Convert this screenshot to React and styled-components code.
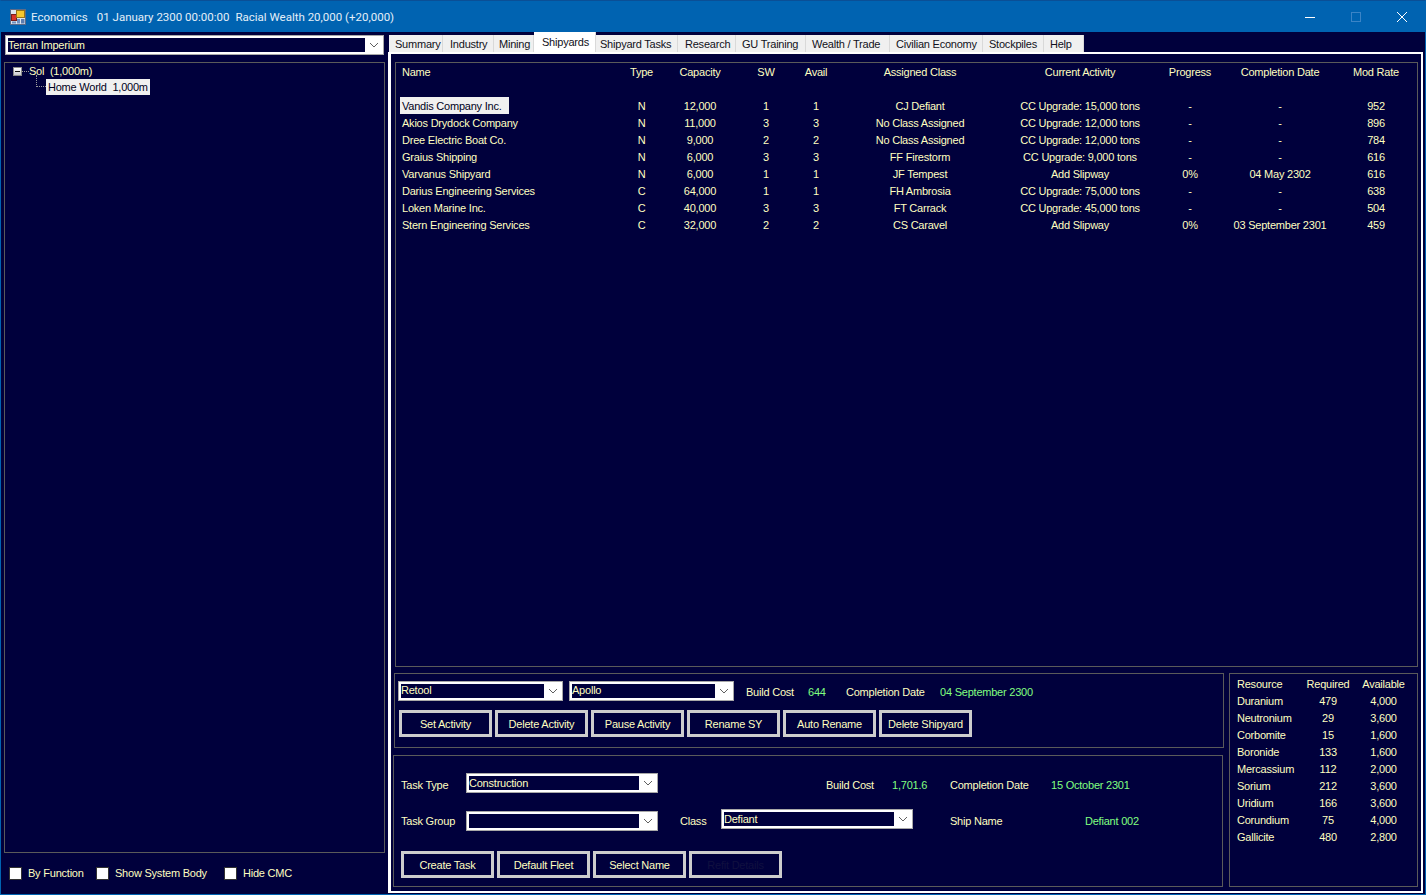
import React from 'react';
import styled, { createGlobalStyle } from 'styled-components';

const GlobalStyle = createGlobalStyle`
  html, body {
    margin: 0;
    padding: 0;
    background: #00003c;
  }
  * {
    box-sizing: border-box;
  }
`;

const Window = styled.div`
  width: 1426px;
  height: 895px;
  display: flex;
  flex-direction: column;
  overflow: hidden;
  background: #00003c;
  border: 1px solid #0063b1;
  border-top: 1px solid #0a4f96;
  font-family: "Liberation Sans", Arial, sans-serif;
  font-size: 11px;
  letter-spacing: -0.22px;
  color: #ffffc0;
`;

const TitleBar = styled.div`
  height: 31px;
  flex: none;
  display: flex;
  align-items: center;
  background: #0063b1;
  padding-left: 9px;
  color: #e4eff8;
  font-family: Roboto, "Open Sans", sans-serif;
  font-size: 11.5px;
  letter-spacing: 0;
`;

const TitleText = styled.span`
  margin-left: ${p => p.$gap}px;
  white-space: pre;
`;

const WindowControls = styled.div`
  margin-left: auto;
  display: flex;
  height: 100%;
`;

const WindowControl = styled.div`
  width: 46px;
  height: 100%;
  display: flex;
  align-items: center;
  justify-content: center;
`;

const Main = styled.div`
  flex: 1;
  min-height: 0;
  display: flex;
`;

const LeftPane = styled.div`
  width: 386px;
  flex: none;
  display: flex;
  flex-direction: column;
  padding: 3px 2px 0 3px;
`;

const GroupPanel = styled.div`
  border: 1px solid #5a5a5a;
`;

const TreePanel = styled(GroupPanel)`
  height: 791px;
  margin-top: 7px;
  padding: 0 0 0 8px;
`;

const TreeRoot = styled.div`
  height: 16px;
  display: flex;
  align-items: center;
`;

const MinusBox = styled.div`
  width: 9px;
  height: 9px;
  flex: none;
  background: linear-gradient(#ffffff, #c8c8d0);
  border: 1px solid #8a8a8a;
  display: flex;
  align-items: center;
  justify-content: center;
  &::after {
    content: '';
    width: 5px;
    height: 1px;
    background: #111;
  }
`;

const TreeDots = styled.div`
  width: 7px;
  height: 0;
  flex: none;
  border-top: 1px dotted #9a9a9a;
`;

const TreeChildRow = styled.div`
  display: flex;
  align-items: center;
  padding-left: 23px;
  height: 16px;
`;

const TreeElbow = styled.div`
  width: 10px;
  height: 12px;
  flex: none;
  margin-top: -12px;
  border-left: 1px dotted #9a9a9a;
  border-bottom: 1px dotted #9a9a9a;
`;

const SelectedLabel = styled.span`
  display: inline-flex;
  align-items: center;
  height: ${p => p.$height}px;
  padding: 0 2px;
  background: #f0f0f0;
  color: #000020;
  white-space: pre;
`;

const Label = styled.span`
  white-space: pre;
  flex: none;
  color: ${p => (p.$green ? '#80ff80' : '#ffffc0')};
  width: ${p => (p.$w ? `${p.$w}px` : 'auto')};
  margin-left: ${p => p.$ml || 0}px;
`;

const OptionsRow = styled.div`
  flex: 1;
  display: flex;
  align-items: center;
  padding: 0 0 1px 5px;
`;

const CheckBox = styled.div`
  width: 13px;
  height: 13px;
  flex: none;
  background: #fff;
  border: 1px solid #333;
  margin-right: 6px;
`;

const CheckItem = styled.label`
  display: flex;
  align-items: center;
  width: ${p => p.$w}px;
`;

const SelectBox = styled.div`
  width: ${p => p.$w}px;
  height: 20px;
  flex: none;
  display: flex;
  background: #fff;
  border: 1px solid #a8a8a8;
  padding: 2px 0 2px 2px;
  margin-left: ${p => p.$ml || 0}px;
  margin-bottom: ${p => p.$lift || 0}px;
`;

const SelectValue = styled.div`
  flex: 1;
  background: #00003c;
  color: #ffffc0;
  padding-top: ${p => p.$top || 0}px;
  line-height: 12px;
  white-space: pre;
  overflow: hidden;
`;

const SelectArrow = styled.div`
  width: 18px;
  flex: none;
  display: flex;
  align-items: center;
  justify-content: center;
`;

const RightPane = styled.div`
  flex: 1;
  min-width: 0;
  display: flex;
  flex-direction: column;
  margin: 0 2px 1px 1px;
`;

const TabStrip = styled.div`
  height: 20px;
  flex: none;
  display: flex;
  align-items: flex-end;
  padding-left: 1px;
`;

const Tab = styled.div`
  width: ${p => p.$w}px;
  height: ${p => (p.$active ? 20 : 17)}px;
  flex: none;
  display: flex;
  align-items: ${p => (p.$active ? 'flex-start' : 'center')};
  padding-left: ${p => p.$pad}px;
  padding-top: ${p => (p.$active ? 4 : 0)}px;
  background: ${p => (p.$active ? '#ffffff' : '#f0f0f0')};
  border-right: 1px solid #d9d9d9;
  color: #101020;
  white-space: pre;
`;

const TabPage = styled.div`
  flex: 1;
  min-height: 0;
  display: flex;
  flex-direction: column;
  border-style: solid;
  border-color: #ffffff;
  border-width: 2px 2px 2px 3px;
  padding: 8px 3px 4px 4px;
`;

const ListPanel = styled(GroupPanel)`
  height: 605px;
  flex: none;
`;

const ListHeader = styled.div`
  display: grid;
  grid-template-columns: 221px 49px 68px 64px 36px 172px 148px 72px 108px 84px;
  height: 17px;
  align-items: center;
  margin-bottom: 17px;
`;

const ListRow = styled(ListHeader)`
  margin-bottom: 0;
`;

const Cell = styled.div`
  text-align: ${p => (p.$left ? 'left' : 'center')};
  padding-left: ${p => (p.$left ? 6 : 0)}px;
  white-space: pre;
`;

const SelectedCell = styled.div`
  padding-left: 4px;
`;

const BottomRow = styled.div`
  flex: 1;
  min-height: 0;
  display: flex;
  margin-top: 6px;
`;

const BottomLeft = styled.div`
  width: 830px;
  flex: none;
  margin-left: -1px;
  display: flex;
  flex-direction: column;
  gap: 7px;
`;

const ActionPanel = styled(GroupPanel)`
  height: 75px;
  padding: 8px 0 0 3px;
`;

const TaskPanel = styled(GroupPanel)`
  flex: 1;
  margin-left: -1px;
  margin-right: 1px;
  padding: 19px 0 0 7px;
`;

const FormRow = styled.div`
  display: flex;
  align-items: center;
  height: 20px;
`;

const TaskRow = styled(FormRow)`
  margin-bottom: ${p => p.$mb || 0}px;
`;

const ButtonRow = styled.div`
  display: flex;
  gap: 3px;
  margin-top: ${p => p.$mt}px;
  margin-left: ${p => p.$ml || 0}px;
`;

const ActionButton = styled.div`
  width: 93px;
  height: 27px;
  flex: none;
  display: flex;
  align-items: center;
  justify-content: center;
  background: #00003c;
  border: 3px solid #cdcdcd;
  color: ${p => (p.$disabled ? '#101040' : '#ffffc0')};
  white-space: pre;
`;

const ResourcePanel = styled(GroupPanel)`
  width: 189px;
  margin-left: 5px;
  flex: none;
  padding: 1px 0 0 7px;
`;

const ResourceRow = styled.div`
  display: grid;
  grid-template-columns: 63px 56px 55px;
  height: 17px;
  align-items: center;
`;

const ResourceCell = styled.div`
  text-align: ${p => (p.$left ? 'left' : 'center')};
  white-space: pre;
`;

const AppIcon = () => (
  <svg width="16" height="16" viewBox="0 0 16 16">
    <rect x="0.5" y="0.5" width="15" height="15" fill="#dfe6ee" stroke="#5b6b88" />
    <rect x="1.5" y="5.5" width="5" height="6" fill="#d8342a" stroke="#7a1d1a" />
    <rect x="6.5" y="1.5" width="8" height="7" fill="#f5c82e" stroke="#96741a" />
    <rect x="2" y="12.5" width="4" height="2" fill="#6d8fc0" />
    <rect x="7" y="10" width="3" height="4.5" fill="#6d8fc0" />
    <rect x="11" y="10" width="3.5" height="4.5" fill="#5b7db0" />
  </svg>
);

const Chevron = () => (
  <svg width="10" height="6" viewBox="0 0 10 6">
    <path d="M1 1 L5 5 L9 1" fill="none" stroke="#606060" strokeWidth="1" />
  </svg>
);

const Select = ({ w, ml, lift, top, value }) => (
  <SelectBox $w={w} $ml={ml} $lift={lift}>
    <SelectValue $top={top}>{value}</SelectValue>
    <SelectArrow>
      <Chevron />
    </SelectArrow>
  </SelectBox>
);

const tabs = [
  ['Summary', 54, 6],
  ['Industry', 51, 7],
  ['Mining', 40, 5],
  ['Shipyards', 62, 8],
  ['Shipyard Tasks', 82, 4],
  ['Research', 58, 7],
  ['GU Training', 70, 6],
  ['Wealth / Trade', 84, 6],
  ['Civilian Economy', 93, 6],
  ['Stockpiles', 61, 6],
  ['Help', 40, 6],
];

const yards = [
  ['Vandis Company Inc.', 'N', '12,000', '1', '1', 'CJ Defiant', 'CC Upgrade: 15,000 tons', '-', '-', '952'],
  ['Akios Drydock Company', 'N', '11,000', '3', '3', 'No Class Assigned', 'CC Upgrade: 12,000 tons', '-', '-', '896'],
  ['Dree Electric Boat Co.', 'N', '9,000', '2', '2', 'No Class Assigned', 'CC Upgrade: 12,000 tons', '-', '-', '784'],
  ['Graius Shipping', 'N', '6,000', '3', '3', 'FF Firestorm', 'CC Upgrade: 9,000 tons', '-', '-', '616'],
  ['Varvanus Shipyard', 'N', '6,000', '1', '1', 'JF Tempest', 'Add Slipway', '0%', '04 May 2302', '616'],
  ['Darius Engineering Services', 'C', '64,000', '1', '1', 'FH Ambrosia', 'CC Upgrade: 75,000 tons', '-', '-', '638'],
  ['Loken Marine Inc.', 'C', '40,000', '3', '3', 'FT Carrack', 'CC Upgrade: 45,000 tons', '-', '-', '504'],
  ['Stern Engineering Services', 'C', '32,000', '2', '2', 'CS Caravel', 'Add Slipway', '0%', '03 September 2301', '459'],
];

const columns = ['Name', 'Type', 'Capacity', 'SW', 'Avail', 'Assigned Class', 'Current Activity', 'Progress', 'Completion Date', 'Mod Rate'];

const resources = [
  ['Resource', 'Required', 'Available'],
  ['Duranium', '479', '4,000'],
  ['Neutronium', '29', '3,600'],
  ['Corbomite', '15', '1,600'],
  ['Boronide', '133', '1,600'],
  ['Mercassium', '112', '2,000'],
  ['Sorium', '212', '3,600'],
  ['Uridium', '166', '3,600'],
  ['Corundium', '75', '4,000'],
  ['Gallicite', '480', '2,800'],
];

const App = () => {
  return (
    <>
      <GlobalStyle />
      <Window>
        <TitleBar>
          <AppIcon />
          <TitleText $gap={5}>Economics</TitleText>
          <TitleText $gap={9}>01 January 2300 00:00:00</TitleText>
          <TitleText $gap={6}>Racial Wealth 20,000 (+20,000)</TitleText>
          <WindowControls>
            <WindowControl>
              <svg width="10" height="10" viewBox="0 0 10 10">
                <path d="M0 5.5 H10" stroke="#fff" strokeWidth="1" />
              </svg>
            </WindowControl>
            <WindowControl>
              <svg width="10" height="10" viewBox="0 0 10 10">
                <rect x="0.5" y="0.5" width="9" height="9" fill="none" stroke="#3b84c6" />
              </svg>
            </WindowControl>
            <WindowControl>
              <svg width="10" height="10" viewBox="0 0 10 10">
                <path d="M0 0 L10 10 M10 0 L0 10" stroke="#fff" strokeWidth="1" />
              </svg>
            </WindowControl>
          </WindowControls>
        </TitleBar>
        <Main>
          <LeftPane>
            <Select w={379} ml={1} top={1} value="Terran Imperium" />
            <TreePanel>
              <TreeRoot>
                <MinusBox />
                <TreeDots />
                <Label>Sol  (1,000m)</Label>
              </TreeRoot>
              <TreeChildRow>
                <TreeElbow />
                <SelectedLabel $height={16}>Home World  1,000m</SelectedLabel>
              </TreeChildRow>
            </TreePanel>
            <OptionsRow>
              <CheckItem $w={87}><CheckBox />By Function</CheckItem>
              <CheckItem $w={128}><CheckBox />Show System Body</CheckItem>
              <CheckItem $w={90}><CheckBox />Hide CMC</CheckItem>
            </OptionsRow>
          </LeftPane>
          <RightPane>
            <TabStrip>
              {tabs.map(([name, w, pad]) => (
                <Tab key={name} $w={w} $pad={pad} $active={name === 'Shipyards'}>{name}</Tab>
              ))}
            </TabStrip>
            <TabPage>
              <ListPanel>
                <ListHeader>
                  {columns.map((c, i) => (
                    <Cell key={c} $left={i === 0}>{c}</Cell>
                  ))}
                </ListHeader>
                {yards.map((row, r) => (
                  <ListRow key={row[0]}>
                    {row.map((v, i) => {
                      if (i === 0 && r === 0) {
                        return (
                          <SelectedCell key={i}>
                            <SelectedLabel $height={17}>{v}  </SelectedLabel>
                          </SelectedCell>
                        );
                      }
                      return <Cell key={i} $left={i === 0}>{v}</Cell>;
                    })}
                  </ListRow>
                ))}
              </ListPanel>
              <BottomRow>
                <BottomLeft>
                  <ActionPanel>
                    <FormRow>
                      <Select w={165} lift={2} value="Retool" />
                      <Select w={165} ml={6} lift={2} value="Apollo" />
                      <Label $w={62} $ml={12}>Build Cost</Label>
                      <Label $w={38} $green>644</Label>
                      <Label $w={94}>Completion Date</Label>
                      <Label $green>04 September 2300</Label>
                    </FormRow>
                    <ButtonRow $mt={8} $ml={1}>
                      <ActionButton>Set Activity</ActionButton>
                      <ActionButton>Delete Activity</ActionButton>
                      <ActionButton>Pause Activity</ActionButton>
                      <ActionButton>Rename SY</ActionButton>
                      <ActionButton>Auto Rename</ActionButton>
                      <ActionButton>Delete Shipyard</ActionButton>
                    </ButtonRow>
                  </ActionPanel>
                  <TaskPanel>
                    <TaskRow $mb={16}>
                      <Label $w={65}>Task Type</Label>
                      <Select w={192} lift={4} top={1} value="Construction" />
                      <Label $w={66} $ml={168}>Build Cost</Label>
                      <Label $w={58} $green>1,701.6</Label>
                      <Label $w={101}>Completion Date</Label>
                      <Label $green>15 October 2301</Label>
                    </TaskRow>
                    <TaskRow>
                      <Label $w={65}>Task Group</Label>
                      <Select w={192} value=" " />
                      <Label $w={41} $ml={22}>Class</Label>
                      <Select w={192} lift={4} top={1} value="Defiant" />
                      <Label $w={135} $ml={37}>Ship Name</Label>
                      <Label $green>Defiant 002</Label>
                    </TaskRow>
                    <ButtonRow $mt={20}>
                      <ActionButton>Create Task</ActionButton>
                      <ActionButton>Default Fleet</ActionButton>
                      <ActionButton>Select Name</ActionButton>
                      <ActionButton $disabled>Refit Details</ActionButton>
                    </ButtonRow>
                  </TaskPanel>
                </BottomLeft>
                <ResourcePanel>
                  {resources.map(row => (
                    <ResourceRow key={row[0]}>
                      <ResourceCell $left>{row[0]}</ResourceCell>
                      <ResourceCell>{row[1]}</ResourceCell>
                      <ResourceCell>{row[2]}</ResourceCell>
                    </ResourceRow>
                  ))}
                </ResourcePanel>
              </BottomRow>
            </TabPage>
          </RightPane>
        </Main>
      </Window>
    </>
  );
};

export default App;
